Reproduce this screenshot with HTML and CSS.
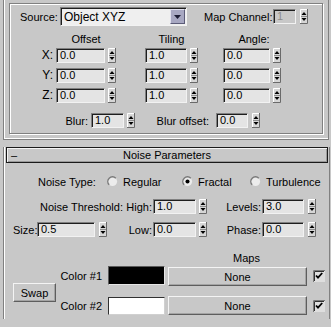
FILE: index.html
```html
<!DOCTYPE html>
<html>
  <head>
    <meta charset="UTF-8" />
    <title>Noise Parameters</title>
    <link rel="stylesheet" href="styles.css">
  </head>
  <body>
    <svg class="defs" width="0" height="0">
      <defs>
        <symbol id="spin" viewBox="0 0 8 15">
          <rect width="8" height="15" fill="#d6d6d6"/>
          <path d="M.5 14V.5H7" stroke="#fff" fill="none"/>
          <path d="M7.5 0V14.5H0" stroke="#6a6a6a" fill="none"/>
          <path d="M1 7.5H7" stroke="#8c8c8c"/>
          <path d="M1.5 6H6.5L4 3Z" fill="#000"/>
          <path d="M1.5 9H6.5L4 12Z" fill="#000"/>
        </symbol>
        <symbol id="radio" viewBox="0 0 12 12">
          <circle cx="6" cy="6" r="5" fill="#ececec"/>
          <path d="M2.4 9.6A5 5 0 0 1 9.6 2.4" stroke="#7a7a7a" stroke-width="1.6" fill="none"/>
        </symbol>
        <symbol id="radio-on" viewBox="0 0 12 12">
          <circle cx="6" cy="6" r="5" fill="#ececec"/>
          <path d="M2.4 9.6A5 5 0 0 1 9.6 2.4" stroke="#7a7a7a" stroke-width="1.6" fill="none"/>
          <circle cx="6" cy="6" r="2.2" fill="#000"/>
        </symbol>
        <symbol id="check" viewBox="0 0 12 12">
          <rect width="12" height="12" fill="#dedede"/>
          <path d="M.5 12V.5H12" stroke="#7a7a7a" fill="none"/>
          <path d="M1.5 11V1.5H11" stroke="#303030" fill="none"/>
          <path d="M3 5.5l2 2.2 4.2-4.7" stroke="#000" stroke-width="1.8" fill="none"/>
        </symbol>
      </defs>
    </svg>

    <div class="rollout-top">
      <div class="group">
        <div class="src-row">
          <span class="src-lbl">Source:</span>
          <div class="combo">
            <span class="combo-text">Object XYZ</span>
            <span class="combo-btn">
              <svg width="7" height="4" viewBox="0 0 7 4"><path d="M0 0h7L3.5 4z" fill="#1c1c34"/></svg>
            </span>
          </div>
          <span class="mc-lbl">Map Channel:</span>
          <span class="field disabled w23">1</span>
          <svg class="arr ml4"><use href="#spin"/></svg>
        </div>

        <div class="coord-heads">
          <span class="head c-off">Offset</span>
          <span class="head c-til">Tiling</span>
          <span class="head c-ang">Angle:</span>
        </div>

        <div class="coord-grid">
          <span class="axis">X:</span>
          <div class="spin"><span class="field w49">0.0</span><svg class="arr"><use href="#spin"/></svg></div>
          <span></span>
          <div class="spin"><span class="field w42">1.0</span><svg class="arr"><use href="#spin"/></svg></div>
          <span></span>
          <div class="spin"><span class="field w47">0.0</span><svg class="arr"><use href="#spin"/></svg></div>

          <span class="axis">Y:</span>
          <div class="spin"><span class="field w49">0.0</span><svg class="arr"><use href="#spin"/></svg></div>
          <span></span>
          <div class="spin"><span class="field w42">1.0</span><svg class="arr"><use href="#spin"/></svg></div>
          <span></span>
          <div class="spin"><span class="field w47">0.0</span><svg class="arr"><use href="#spin"/></svg></div>

          <span class="axis">Z:</span>
          <div class="spin"><span class="field w49">0.0</span><svg class="arr"><use href="#spin"/></svg></div>
          <span></span>
          <div class="spin"><span class="field w42">1.0</span><svg class="arr"><use href="#spin"/></svg></div>
          <span></span>
          <div class="spin"><span class="field w47">0.0</span><svg class="arr"><use href="#spin"/></svg></div>
        </div>

        <div class="blur-row">
          <span class="lbl blur-lbl">Blur:</span>
          <span class="field w33">1.0</span>
          <svg class="arr ml3"><use href="#spin"/></svg>
          <span class="lbl boff-lbl">Blur offset:</span>
          <span class="field w32">0.0</span>
          <svg class="arr ml4"><use href="#spin"/></svg>
        </div>
      </div>
    </div>

    <div class="rollout-bot">
      <div class="hdr">
        <span class="hdr-dash">&ndash;</span>
        <span class="hdr-title">Noise Parameters</span>
        <span></span>
      </div>

      <div class="type-row">
        <span class="type-lbl">Noise Type:</span>
        <span class="opt opt-reg"><svg class="radio"><use href="#radio"/></svg>Regular</span>
        <span class="opt opt-frac"><svg class="radio"><use href="#radio-on"/></svg>Fractal</span>
        <span class="opt"><svg class="radio"><use href="#radio"/></svg>Turbulence</span>
      </div>

      <div class="thr-row">
        <span class="thr-lbl">Noise Threshold:</span>
        <span class="lbl high-lbl">High:</span>
        <span class="field w43">1.0</span>
        <svg class="arr ml3"><use href="#spin"/></svg>
        <span class="lbl lev-lbl">Levels:</span>
        <span class="field w42">3.0</span>
        <svg class="arr ml4"><use href="#spin"/></svg>
      </div>

      <div class="size-row">
        <span class="size-lbl">Size:</span>
        <span class="field w58">0.5</span>
        <svg class="arr ml4"><use href="#spin"/></svg>
        <span class="lbl low-lbl">Low:</span>
        <span class="field w43">0.0</span>
        <svg class="arr ml3"><use href="#spin"/></svg>
        <span class="lbl lev-lbl">Phase:</span>
        <span class="field w42">0.0</span>
        <svg class="arr ml4"><use href="#spin"/></svg>
      </div>

      <div class="maps-grid">
        <span class="maps-lbl">Maps</span>
        <button class="btn swap">Swap</button>

        <span class="clr-lbl r1">Color #1</span>
        <span class="swatch black r1"></span>
        <button class="btn none r1">None</button>
        <svg class="chk r1"><use href="#check"/></svg>

        <span class="clr-lbl r2">Color #2</span>
        <span class="swatch white r2"></span>
        <button class="btn none r2">None</button>
        <svg class="chk r2"><use href="#check"/></svg>
      </div>
    </div>
  </body>
</html>
```

FILE: styles.css
```css
* {
  box-sizing: border-box;
  margin: 0;
  padding: 0;
}

body {
  width: 331px;
  height: 327px;
  overflow: hidden;
  background: #c8c8c8;
  font: 11px "Liberation Sans", Arial, sans-serif;
  color: #000;
}

.defs {
  position: absolute;
  width: 0;
  height: 0;
}

/* ---- shared controls ---- */

.field {
  display: block;
  height: 15px;
  background: #e4e4e4;
  border: 1px solid;
  border-color: #808080 #f2f2f2 #f2f2f2 #808080;
  box-shadow: inset 1px 1px 0 #1e1e1e;
  padding-left: 3px;
  line-height: 13px;
  white-space: nowrap;
}

.field.disabled {
  background: #c8c8c8;
  color: #8c8c8c;
}

.w23 { width: 23px; }
.w32 { width: 32px; }
.w33 { width: 33px; }
.w42 { width: 42px; }
.w43 { width: 43px; }
.w47 { width: 47px; }
.w49 { width: 49px; }
.w58 { width: 58px; }

.arr {
  display: block;
  width: 8px;
  height: 15px;
  flex: none;
}

.ml3 { margin-left: 3px; }
.ml4 { margin-left: 4px; }

.lbl {
  text-align: right;
  padding-right: 1px;
  white-space: nowrap;
}

.btn {
  font: inherit;
  color: #000;
  background: #c8c8c8;
  border: 1px solid;
  border-color: #f4f4f4 #5e5e5e #5e5e5e #f4f4f4;
  box-shadow: inset -1px -1px 0 #a4a4a4;
}

/* ---- coordinates rollout ---- */

.rollout-top {
  margin-left: 3px;
  width: 326px;
  height: 140px;
  padding: 3px 0 0 5px;
  border: 1px solid #808080;
  border-top: none;
  box-shadow: inset 1px 0 0 #fff, inset 0 -1px 0 #fff;
}

.group {
  width: 314px;
  height: 131px;
  border: 1px solid #808080;
  box-shadow: inset 1px 1px 0 #fff, 1px 1px 0 #fff;
}

.src-row {
  display: flex;
  align-items: center;
  height: 19px;
  margin-top: 3px;
  padding-left: 10px;
}

.src-lbl {
  width: 40px;
}

.combo {
  display: flex;
  align-items: center;
  justify-content: space-between;
  width: 127px;
  height: 19px;
  padding: 1px 1px 1px 2px;
  background: #efefef;
  border: 1px solid;
  border-color: #808080 #f2f2f2 #f2f2f2 #808080;
  box-shadow: inset 1px 1px 0 #1e1e1e;
  font-size: 12px;
}

.combo-text {
  padding-left: 1px;
}

.combo-btn {
  display: flex;
  align-items: center;
  justify-content: center;
  width: 15px;
  height: 15px;
  background: #a8a8c2;
  border: 1px solid;
  border-color: #e2e2f0 #5c5c78 #5c5c78 #e2e2f0;
}

.mc-lbl {
  width: 69px;
  margin-left: 17px;
  padding-right: 2px;
  text-align: right;
  white-space: nowrap;
}

.coord-heads {
  display: grid;
  grid-template-columns: 46px 60px 29px 53px 25px 58px;
  height: 13px;
  margin-top: 7px;
  line-height: 13px;
}

.head {
  text-align: center;
}

.c-off { grid-column: 2; }
.c-til { grid-column: 4; }
.c-ang { grid-column: 6; padding-left: 4px; }

.coord-grid {
  display: grid;
  grid-template-columns: 46px 60px 29px 53px 25px 58px;
  grid-auto-rows: 15px;
  row-gap: 5px;
  margin-top: 2px;
}

.axis {
  text-align: right;
  padding-right: 3px;
  line-height: 15px;
  font-size: 12px;
}

.spin {
  display: flex;
  gap: 3px;
}

.blur-row {
  display: flex;
  align-items: center;
  height: 15px;
  margin-top: 10px;
}

.blur-lbl {
  width: 81px;
  padding-right: 3px;
}

.boff-lbl {
  width: 81px;
  padding-right: 7px;
}

/* ---- noise parameters rollout ---- */

.rollout-bot {
  margin: 15px 0 0 3px;
  width: 327px;
  height: 172px;
  border-left: 1px solid #808080;
  border-right: 1px solid #808080;
  box-shadow: inset 1px 0 0 #fff;
}

.hdr {
  display: grid;
  grid-template-columns: 1fr auto 1fr;
  align-items: center;
  width: 322px;
  height: 16px;
  margin: -8px 0 0 2px;
  background: #c8c8c8;
  border: 1px solid #1a1a1a;
  box-shadow: inset 1px 1px 0 #f4f4f4, inset -1px -1px 0 #9a9a9a;
  line-height: 14px;
}

.hdr-dash {
  padding-left: 4px;
}

.type-row {
  display: flex;
  align-items: center;
  height: 13px;
  margin-top: 12px;
  padding-left: 34px;
}

.type-lbl {
  width: 69px;
}

.opt {
  display: flex;
  align-items: center;
}

.opt-reg { width: 75px; }
.opt-frac { width: 68px; }

.radio {
  width: 11px;
  height: 11px;
  margin-right: 5px;
  flex: none;
}

.thr-row,
.size-row {
  display: flex;
  align-items: center;
  height: 15px;
}

.thr-row {
  margin-top: 11px;
  padding-left: 36px;
}

.thr-lbl {
  width: 86px;
  white-space: nowrap;
}

.high-lbl { width: 27px; }
.lev-lbl { width: 55px; }

.size-row {
  margin-top: 8px;
  padding-left: 9px;
}

.size-lbl { width: 24px; }
.low-lbl { width: 46px; }

.maps-grid {
  display: grid;
  grid-template-columns: 56px 46px 60px 2px 139px 6px 12px;
  grid-template-rows: 14px 20px 10px 20px;
  margin-top: 15px;
}

.maps-lbl {
  grid-column: 5 / 8;
  grid-row: 1;
  text-align: center;
  line-height: 12px;
}

.swap {
  grid-column: 1;
  grid-row: 2 / 5;
  align-self: start;
  width: 43px;
  height: 19px;
  margin: 17px 0 0 9px;
}

.r1 { grid-row: 2; }
.r2 { grid-row: 4; }

.clr-lbl {
  grid-column: 2;
  align-self: center;
  text-align: right;
  padding-right: 4px;
  white-space: nowrap;
}

.swatch {
  grid-column: 3;
  display: block;
  width: 57px;
  margin-left: 2px;
  border: 1px solid;
}

.swatch.black {
  height: 19px;
  background: #000;
  border-color: #5a5a5a #e6e6e6 #e6e6e6 #5a5a5a;
}

.swatch.white {
  height: 18px;
  margin-top: 1px;
  background: #fff;
  border-color: #303030 #d0d0d0 #d0d0d0 #303030;
}

.none {
  grid-column: 5;
  height: 19px;
  align-self: start;
}

.none.r1 {
  margin-top: 1px;
}

.chk {
  grid-column: 7;
  align-self: center;
  width: 12px;
  height: 12px;
}
```
